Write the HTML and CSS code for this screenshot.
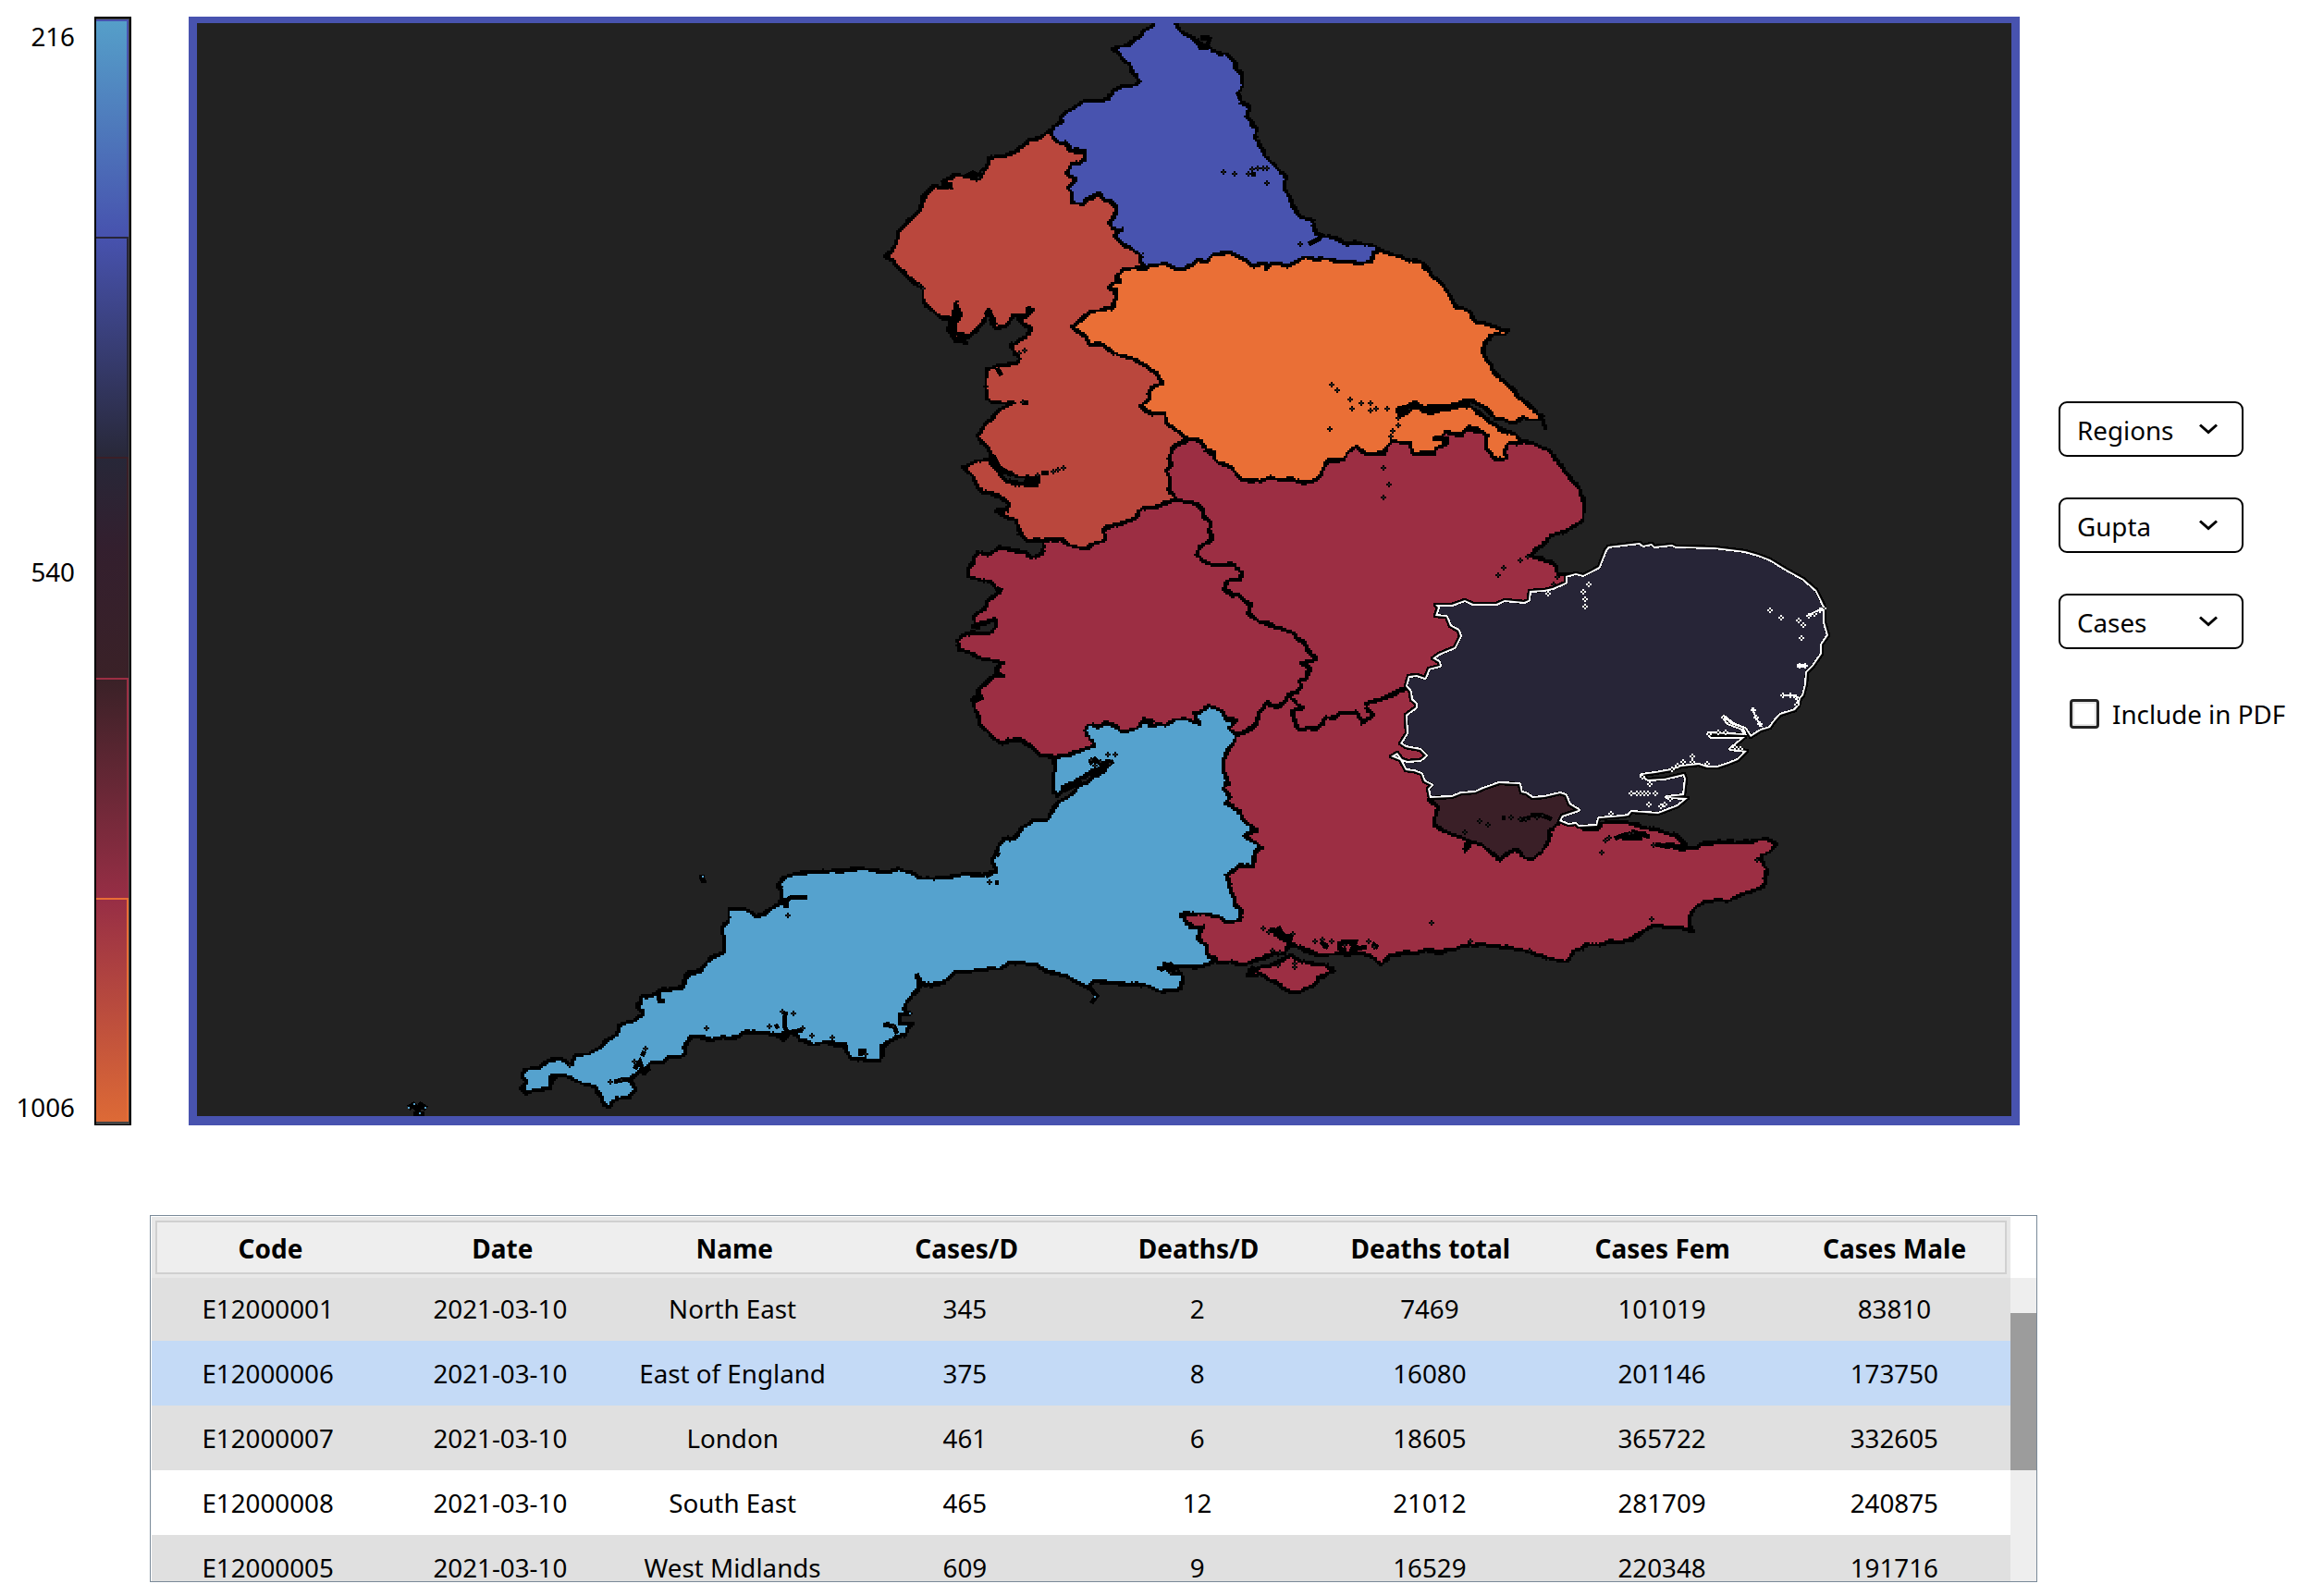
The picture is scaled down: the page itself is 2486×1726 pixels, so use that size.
FILE: index.html
```html
<!DOCTYPE html>
<html lang="en">
<head>
<meta charset="utf-8">
<title>Regional cases</title>
<link rel="stylesheet" href="styles.css">
</head>
<body>
<main class="top">
  <div class="labels"><span>216</span><span>540</span><span>1006</span></div>
  <div class="legend">
    <div class="band b1"></div><div class="band b2"></div><div class="band b3"></div><div class="band b4"></div><div class="band b5"></div>
  </div>
  <div class="map">
    <svg class="canvas" viewBox="213 25 1962 1182" shape-rendering="crispEdges" preserveAspectRatio="none">
      <defs>
        <filter id="coast" filterUnits="userSpaceOnUse" x="213" y="25" width="1962" height="1182" color-interpolation-filters="sRGB">
          <feTurbulence type="fractalNoise" baseFrequency="0.08" numOctaves="1" seed="4" result="noise"/>
          <feDisplacementMap in="SourceGraphic" in2="noise" scale="7" xChannelSelector="R" yChannelSelector="G" result="rough"/>
          <feFlood x="213" y="25" width="1" height="1" flood-color="#000"/>
          <feComposite x="213" y="25" width="2" height="2"/>
          <feTile result="lattice"/>
          <feComposite in="rough" in2="lattice" operator="in" result="a"/>
          <feOffset in="a" dx="1" dy="0" result="b"/>
          <feOffset in="a" dx="0" dy="1" result="c"/>
          <feOffset in="a" dx="1" dy="1" result="d"/>
          <feMerge><feMergeNode in="a"/><feMergeNode in="b"/><feMergeNode in="c"/><feMergeNode in="d"/></feMerge>
        </filter>
        <marker id="dot" markerUnits="userSpaceOnUse" markerWidth="6" markerHeight="6" refX="3" refY="3">
          <path d="M2 0h2v6h-2zM0 2h6v2h-6z" fill="#000"/><path d="M2 2h2v2h-2z" fill="#222"/>
        </marker>
        <marker id="wdot" markerUnits="userSpaceOnUse" markerWidth="6" markerHeight="6" refX="3" refY="3">
          <path d="M2 0h2v6h-2zM0 2h6v2h-6z" fill="#fff"/><path d="M2 2h2v2h-2z" fill="#222"/>
        </marker>
        <path id="east" d="M1739 591 1773 587 1777 590 1786 588 1789 591 1808 589 1812 591 1854 592 1887 596 1901 600 1914 605 1932 616 1950 626 1964 638 1970 650 1973 657 1973 673 1977 687 1970 697 1970 707 1961 720 1954 727 1953 740 1950 752 1947 755 1945 763 1941 768 1925 773 1918 781 1914 787 1904 790 1893 797 1887 788 1874 783 1864 775 1868 782 1884 788 1887 795 1848 793 1850 797 1887 797 1871 810 1889 812 1879 822 1869 826 1857 830 1846 830 1837 827 1818 829 1807 833 1790 836 1775 838 1782 843 1800 842 1821 837 1823 842 1821 860 1802 862 1825 863 1814 872 1793 880 1764 878 1761 882 1754 883 1729 885 1727 893 1707 894 1704 891 1696 892 1686 888 1689 882 1698 879 1707 876 1697 870 1693 860 1687 858 1670 862 1657 863 1650 858 1645 857 1643 848 1621 847 1604 853 1595 857 1580 858 1570 862 1546 863 1544 853 1548 849 1540 845 1537 837 1529 834 1520 833 1514 822 1504 818 1511 814 1516 821 1522 823 1536 822 1542 817 1536 811 1520 808 1514 804 1521 793 1520 773 1531 765 1531 761 1526 757 1525 748 1520 742 1523 731 1532 730 1541 733 1545 723 1557 720 1556 716 1549 712 1556 707 1573 700 1579 688 1577 682 1568 677 1564 667 1552 666 1555 657 1552 654 1570 654 1584 649 1593 653 1618 653 1627 649 1648 651 1653 649 1654 639 1670 638 1679 636 1693 630 1693 623 1704 620 1712 622 1720 618 1729 613 1736 595Z"/>
        <clipPath id="eastClip"><use href="#east"/></clipPath>
      </defs>
      <g class="regions" filter="url(#coast)">
        <path class="r3" d="M1713 897 1727 896 1731 889 1767 890 1780 895 1794 899 1811 902 1823 912 1822 915 1802 913 1812 917 1834 917 1838 913 1872 909 1874 911 1912 907 1919 912 1912 921 1903 923 1906 931 1910 940 1908 956 1897 962 1887 967 1874 971 1864 973 1843 975 1833 981 1827 990 1826 997 1830 1005 1815 1003 1787 1001 1777 1007 1767 1013 1755 1017 1733 1019 1713 1023 1703 1029 1691 1040 1673 1035 1651 1029 1632 1025 1606 1021 1590 1021 1570 1027 1536 1028 1506 1031 1501 1033 1495 1042 1483 1035 1472 1031 1450 1030 1427 1032 1411 1026 1396 1020 1385 1012 1374 1005 1396 1023 1387 1030 1369 1034 1349 1042 1330 1041 1316 1040 1250 1000 1290 900 1290 800 1337 793 1357 785 1362 768 1370 761 1393 752 1450 730 1600 730 1700 870Z"/>
        <path class="r3" d="M1349 1055 1352 1049 1374 1042 1398 1033 1403 1038 1412 1041 1434 1043 1441 1050 1425 1057 1423 1062 1419 1068 1398 1073 1380 1063 1361 1053Z"/>
        <path class="r3" d="M1240 480 1500 440 1648 477 1662 481 1675 486 1690 507 1707 528 1712 543 1712 560 1709 565 1692 573 1677 580 1664 590 1656 600 1664 604 1677 607 1681 614 1685 619 1695 620 1700 640 1600 720 1519 744 1494 755 1477 760 1479 767 1486 771 1472 781 1469 777 1465 770 1450 770 1445 774 1433 777 1432 783 1422 788 1402 787 1397 768 1407 764 1393 752 1250 700Z"/>
        <path class="r3" d="M1270 540 1293 544 1301 552 1302 559 1307 565 1307 573 1311 580 1307 585 1300 588 1293 598 1299 607 1313 610 1334 612 1342 617 1341 625 1325 630 1323 637 1332 643 1338 643 1345 650 1352 653 1349 662 1357 670 1375 675 1397 684 1410 697 1423 712 1406 717 1414 722 1413 733 1404 737 1407 744 1401 748 1393 752 1391 757 1382 763 1370 761 1362 768 1359 776 1357 785 1338 793 1300 830 1160 830 1140 818 1123 816 1112 805 1103 799 1092 800 1082 803 1070 795 1063 787 1059 777 1053 768 1053 757 1051 755 1060 752 1057 747 1068 735 1077 731 1083 731 1076 725 1080 715 1085 715 1063 713 1049 707 1037 701 1033 694 1040 688 1052 684 1068 684 1077 678 1077 670 1073 668 1055 677 1052 668 1058 662 1065 657 1070 647 1080 638 1073 631 1057 627 1046 622 1048 612 1052 605 1058 598 1072 597 1080 591 1092 594 1107 595 1115 603 1127 598 1129 586 1180 560Z"/>
        <path class="r4" d="M1134 143 1122 149 1110 152 1103 158 1096 165 1085 168 1069 170 1070 175 1066 183 1061 190 1054 194 1048 192 1037 189 1024 192 1018 195 1028 200 1019 203 1010 201 1002 206 997 214 995 228 982 238 970 250 969 260 965 271 956 278 965 283 978 295 989 306 997 312 997 324 1005 333 1015 342 1028 343 1025 357 1034 368 1045 371 1037 362 1032 358 1032 350 1037 340 1034 327 1031 345 1034 360 1046 365 1058 353 1065 346 1069 335 1073 342 1076 355 1089 351 1096 342 1107 340 1117 335 1112 331 1115 337 1101 345 1108 351 1115 358 1103 367 1093 373 1096 382 1103 387 1101 392 1091 392 1080 395 1067 398 1067 410 1065 418 1067 431 1074 435 1095 435 1078 445 1067 457 1057 470 1057 474 1065 480 1073 493 1077 503 1087 510 1100 516 1122 517 1120 523 1102 524 1088 518 1080 510 1075 503 1070 495 1057 498 1040 506 1050 513 1062 532 1075 535 1092 543 1087 551 1077 552 1083 557 1098 562 1102 575 1110 584 1127 585 1148 583 1155 591 1167 592 1180 590 1187 586 1195 582 1193 573 1205 567 1222 563 1238 548 1253 548 1270 540 1265 532 1263 513 1260 508 1267 502 1262 496 1270 483 1282 475 1300 400 1250 280 1260 200 1180 140Z"/>
        <path class="r2" d="M1244 29 1249 20 1267 20 1276 33 1288 40 1294 45 1304 50 1311 56 1323 57 1331 62 1336 68 1335 73 1343 82 1344 92 1339 102 1341 109 1351 115 1347 125 1353 134 1359 140 1357 150 1362 158 1376 177 1388 188 1388 202 1397 222 1405 232 1420 240 1422 252 1429 254 1444 257 1452 261 1470 263 1492 269 1500 290 1400 310 1260 310 1236 289 1234 275 1224 268 1208 260 1206 253 1212 248 1204 247 1199 241 1205 232 1207 222 1198 217 1189 209 1176 214 1170 219 1159 217 1157 208 1153 203 1162 194 1153 186 1159 177 1173 172 1172 163 1157 162 1152 155 1142 152 1135 143 1139 136 1148 130 1146 126 1161 116 1172 109 1183 107 1193 109 1199 106 1203 98 1215 93 1227 93 1232 88 1228 80 1224 77 1220 68 1212 62 1204 51 1220 49 1228 40 1235 34Z"/>
        <path class="r5" d="M1236 289 1245 287 1259 285 1274 291 1283 288 1291 285 1294 279 1304 282 1311 275 1326 273 1337 276 1347 281 1355 287 1366 284 1368 290 1374 284 1392 287 1411 279 1437 280 1448 282 1470 283 1483 283 1484 275 1492 269 1503 274 1515 277 1525 282 1537 284 1544 292 1547 298 1555 302 1564 313 1570 325 1577 333 1589 336 1593 344 1598 348 1613 352 1629 357 1627 361 1613 362 1605 368 1603 377 1608 390 1615 402 1637 423 1652 437 1668 452 1671 462 1668 455 1647 452 1632 457 1617 452 1605 442 1593 433 1583 433 1565 438 1540 440 1528 435 1512 441 1512 450 1530 440 1545 447 1557 442 1590 440 1607 453 1617 460 1628 467 1638 470 1648 477 1632 480 1627 488 1627 494 1618 495 1606 485 1606 473 1609 470 1598 464 1589 460 1580 470 1562 468 1553 474 1566 477 1553 485 1550 489 1527 490 1525 478 1505 478 1495 490 1475 490 1468 483 1457 488 1453 497 1437 498 1430 508 1427 515 1419 520 1408 522 1397 517 1382 519 1373 515 1362 519 1342 520 1337 513 1330 505 1315 497 1313 489 1303 485 1298 477 1282 473 1262 458 1258 447 1245 447 1233 438 1242 430 1243 422 1257 413 1250 403 1240 396 1228 388 1220 386 1202 382 1194 372 1178 372 1176 365 1167 360 1159 354 1170 343 1180 336 1192 334 1204 332 1207 315 1197 310 1211 303 1207 298 1215 291Z"/>
        <path class="r1" d="M1140 819 1160 813 1183 806 1173 790 1175 783 1180 783 1187 786 1197 782 1205 785 1212 791 1220 791 1232 785 1235 777 1244 777 1242 783 1258 784 1270 778 1287 778 1297 783 1292 770 1297 770 1308 763 1327 777 1337 778 1329 788 1337 793 1333 802 1326 812 1321 828 1325 840 1323 852 1329 862 1325 869 1333 871 1339 878 1346 888 1351 894 1358 898 1347 902 1356 911 1363 917 1356 922 1355 937 1342 934 1335 940 1325 944 1331 960 1335 977 1341 983 1339 993 1325 997 1318 991 1305 989 1295 987 1277 989 1283 997 1289 1002 1301 1002 1294 1013 1304 1020 1304 1032 1316 1038 1301 1043 1278 1046 1253 1046 1277 1053 1278 1060 1275 1069 1256 1072 1247 1067 1220 1063 1184 1061 1177 1069 1167 1063 1153 1056 1137 1051 1122 1045 1107 1042 1091 1041 1080 1047 1067 1046 1056 1050 1032 1051 1020 1061 1005 1066 996 1062 991 1053 994 1068 982 1080 978 1090 983 1095 972 1097 972 1106 985 1107 979 1119 967 1122 953 1132 952 1145 940 1147 920 1143 914 1135 913 1130 898 1127 880 1129 865 1124 862 1118 852 1118 847 1124 843 1120 830 1117 807 1115 798 1121 777 1123 760 1123 753 1119 744 1122 739 1132 741 1138 737 1143 725 1141 713 1148 703 1150 697 1160 693 1157 680 1167 687 1177 680 1186 667 1187 660 1197 653 1193 648 1183 642 1174 630 1170 617 1167 610 1163 597 1163 595 1176 578 1179 570 1181 563 1176 568 1169 564 1163 568 1156 580 1155 595 1146 607 1144 616 1151 624 1140 637 1140 655 1125 668 1118 670 1108 685 1104 693 1095 689 1087 693 1078 703 1077 713 1071 737 1068 743 1053 758 1048 767 1037 782 1031 783 1017 781 1005 787 995 788 983 803 983 817 989 828 987 847 974 845 963 841 958 848 948 870 943 901 941 929 939 960 943 970 939 984 943 998 949 1025 949 1041 945 1068 946 1077 942 1073 930 1080 915 1084 907 1096 906 1108 893 1118 888 1129 886 1142 870 1156 860 1170 848 1194 832 1199 823 1191 828 1170 840 1149 851 1142 862 1138 855Z"/>
        <path class="r6" d="M1546 863 1554 873 1550 892 1567 901 1586 909 1584 920 1591 911 1596 910 1607 918 1621 928 1637 919 1643 920 1648 928 1657 928 1668 920 1673 912 1675 898 1688 889 1720 870 1660 840 1600 840Z"/>
      </g>
      <g class="creeks">
        <path d="M1294 42 1298 51 1305 51 1308 42 1298 41 1308 40M1415 264 1427 258 1429 252M1018 199 1030 199M1021 203 1030 201M1044 191 1052 187 1058 190 1065 182M1018 344 1028 344 1029 355M1065 337 1072 341 1073 352M1109 334 1117 336M1078 398 1083 406M1338 99 1341 106M1353 188 1358 189M1026 352 1032 366 1045 370"/>
        <path d="M1516 441 1530 439 1545 444 1590 436M1549 475 1567 474M1074 493 1080 505 1094 514M1108 519 1122 520M1126 512 1134 511M1077 636 1084 639M1050 677 1060 679M1078 730 1084 730M1052 755 1063 754 1052 759M1109 433 1109 438M1236 780 1246 780M1378 763 1386 764"/>
        <path d="M1180 835 1196 829 1204 823M1178 826 1184 821 1190 826M1150 855 1170 845M1066 948 1073 944M1076 954 1080 954M1075 922 1081 925M1257 1042 1272 1046M1259 1044 1264 1047M1254 1049 1266 1043 1275 1052M991 1053 996 1064 1003 1066M1178 1068 1186 1077 1180 1085M1325 847 1331 848"/>
        <path d="M849 977 850 982 850 974 856 970 873 970M841 958 846 961M712 1073 713 1082 719 1082M688 1087 693 1085M694 1142 697 1137M686 1156 692 1148 696 1160 703 1155M664 1170 672 1168 682 1167 684 1174M850 1094 848 1102 849 1112 854 1119M838 1111 842 1109M845 1118 868 1114M850 1122 854 1114M930 1142 930 1136 937 1136M955 1108 967 1110 970 1118M958 1107 962 1107M913 1127 915 1134"/>
        <path d="M1374 1005 1384 1007 1396 1018M1382 1002 1386 1010M1394 1010 1396 1017M1428 1018 1436 1025M1432 1026 1434 1020M1448 1018 1448 1026 1456 1028M1450 1018 1466 1018 1462 1027 1478 1024M1460 1020 1470 1026M1484 1020 1490 1025M1376 1028 1378 1033M1352 1046 1360 1050M1348 1055 1354 1052"/>
        <path d="M1746 907 1756 903 1780 901M1754 906 1776 907M1764 899 1784 905M1790 913 1806 916M1624 884 1628 884M1655 882 1666 881 1678 886M1643 887 1655 884M1586 914 1590 908"/>
      </g>
      <g class="regions">
        <use href="#east" class="r7"/>
        <use href="#east" class="selected" clip-path="url(#eastClip)"/>
      </g>
      <g class="dots">
        <path d="M1323 186 1335 188 1350 188 1354 183 1360 182 1366 182 1370 182 1370 198 1406 264 1440 416 1446 422 1460 432 1472 436 1482 436 1462 442 1482 444 1488 442 1500 442 1438 464 1512 452 1512 460 1506 466 1504 472 1496 506 1502 524 1496 538 1652 602 1644 606 1626 614 1620 622 1684 624 1680 632"/>
        <path d="M1108 379 1102 382 1106 435 1150 506 1144 508 1139 510 1122 514 1198 816 1206 816 1180 822 1184 828 1190 824 1200 826 1070 954 998 312 994 308 1058 192 1062 186"/>
        <path d="M852 990 764 1112 832 1110 846 1094 858 1096 868 1112 878 1120 900 1122 698 1134 686 1148 660 1170 672 1168 616 1152 966 1110 936 1140 984 1096"/>
        <path d="M1548 998 1732 922 1736 909 1740 906 1766 901 1788 914 1762 902 1900 930 1786 994 1590 1018 1654 1028 1600 888 1609 892 1584 900 1634 884 1644 886 1650 886 1662 884 1668 882 1366 1004 1372 1008 1376 1028 1384 1030 1398 1010 1422 1018 1430 1016 1440 1018 1454 1022 1480 1018 1486 1024 1400 1042 1400 1046 1382 1044 1266 1052 1272 1050"/>
      </g>
      <path class="scilly" d="M759 946v3l2 5v1M442 1198l5-3 5 5 3-5 6 4M447 1205h12"/>
      <path class="islets" d="M759 947h2v2h-2zM441 1197h2v2h-2zM447 1193h2v2h-2zM459 1197h2v2h-2zM453 1203h2v2h-2zM1183 1077h2v2h-2zM983 1095h2v2h-2z"/>
      <g class="wdots">
        <path d="M1718 632 1712 640 1714 648 1714 656 1674 642 1914 660 1926 668 1945 671 1950 676 1948 690 1946 720 1952 720 1956 666 1962 664 1968 660 1972 658 1928 752 1936 752 1942 754 1943 762 1896 768 1899 776 1903 783 1864 776 1870 782 1858 792 1866 792 1848 794 1876 808 1882 810 1830 818 1830 824 1820 824 1846 826 1808 832 1814 828 1776 840 1784 848 1764 858 1770 858 1774 858 1778 858 1782 858 1790 858 1783 870 1796 872 1800 870 1806 864 1742 880"/>
        <path class="wline" d="M1954 666 1964 661 1972 659M1895 765 1898 775 1905 786M1864 775 1872 782 1884 786 1888 795M1928 752 1942 752 1945 762M1944 719h8v2h-8z"/>
      </g>
    </svg>
  </div>
  <div class="controls">
    <div class="select"><span>Regions</span><svg width="20" height="12" viewBox="0 0 20 12"><path d="M1 1.500 10 9.500 19 1.500" fill="none" stroke="#000" stroke-width="3"/></svg></div>
    <div class="select"><span>Gupta</span><svg width="20" height="12" viewBox="0 0 20 12"><path d="M1 1.500 10 9.500 19 1.500" fill="none" stroke="#000" stroke-width="3"/></svg></div>
    <div class="select"><span>Cases</span><svg width="20" height="12" viewBox="0 0 20 12"><path d="M1 1.500 10 9.500 19 1.500" fill="none" stroke="#000" stroke-width="3"/></svg></div>
    <div class="check"><span class="box"></span><span>Include in PDF</span></div>
  </div>
</main>
<section class="table">
  <div class="grid">
    <div class="row head"><span>Code</span><span>Date</span><span>Name</span><span>Cases/D</span><span>Deaths/D</span><span>Deaths total</span><span>Cases Fem</span><span>Cases Male</span></div>
    <div class="body">
      <div class="row alt first"><span>E12000001</span><span>2021-03-10</span><span>North East</span><span>345</span><span>2</span><span>7469</span><span>101019</span><span>83810</span></div>
      <div class="row sel"><span>E12000006</span><span>2021-03-10</span><span>East of England</span><span>375</span><span>8</span><span>16080</span><span>201146</span><span>173750</span></div>
      <div class="row alt"><span>E12000007</span><span>2021-03-10</span><span>London</span><span>461</span><span>6</span><span>18605</span><span>365722</span><span>332605</span></div>
      <div class="row"><span>E12000008</span><span>2021-03-10</span><span>South East</span><span>465</span><span>12</span><span>21012</span><span>281709</span><span>240875</span></div>
      <div class="row alt last"><span>E12000005</span><span>2021-03-10</span><span>West Midlands</span><span>609</span><span>9</span><span>16529</span><span>220348</span><span>191716</span></div>
    </div>
  </div>
  <div class="side"><div class="track"><div class="thumb"></div></div></div>
</section>
</body>
</html>
```
FILE: styles.css
```css
* { box-sizing: border-box; }
body {
  margin: 0;
  width: 2486px;
  height: 1726px;
  overflow: hidden;
  background: #fff;
  color: #000;
  font: 27.75px/40px "Noto Sans", sans-serif;
}
.top {
  display: grid;
  grid-template-columns: 81px 40px 1980px 1fr;
  height: 1217px;
  padding-top: 18px;
}
.labels {
  display: flex;
  flex-direction: column;
  justify-content: space-between;
  align-items: flex-end;
  padding-top: 1px;
}
.legend {
  margin-left: 21px;
  width: 40px;
  display: grid;
  grid-template-rows: 235px 238px 239px 238px 1fr;
  border: 2px solid #000;
  border-bottom-width: 1px;
  padding: 1px 1px 3px 0;
  background: #444;
}
.band { border-right: 2px solid; border-top: 2px solid; }
.b1 { border-color: #4853af; background: linear-gradient(#559fc9, #4752ae); }
.b2 { border-color: #272538; background: linear-gradient(#4752ae, #282839); }
.b3 { border-color: #3a1f27; background: linear-gradient(#272738, #331f2e 40%, #3a2127); }
.b4 { border-color: #9c2e43; background: linear-gradient(#3a2127, #972e45); }
.b5 { border-color: #e96e35; background: linear-gradient(#972e45, #dd6a36); }
.map {
  margin-left: 83px;
  width: 1980px;
  border: solid #4853af;
  border-width: 7px 9px 10px;
  background: #222;
}
.canvas { display: block; width: 1962px; height: 1182px; }
.regions > * { stroke: #000; stroke-width: 4.5; stroke-linejoin: round; }
.r1 { fill: #55a2ce; }
.r2 { fill: #4853af; }
.r3 { fill: #9c2e43; }
.r4 { fill: #ba473d; }
.r5 { fill: #ea6f36; }
.r6 { fill: #3a1f27; }
.r7 { fill: #272537; }
.regions > .selected { fill: none; stroke: #fff; stroke-width: 4; }
.creeks { fill: none; stroke: #000; stroke-width: 5; }
.dots path {
  fill: none;
  marker-start: url(#dot);
  marker-mid: url(#dot);
  marker-end: url(#dot);
}
.wdots path:first-child {
  fill: none;
  marker-start: url(#wdot);
  marker-mid: url(#wdot);
  marker-end: url(#wdot);
}
.wdots .wline { fill: none; stroke: #fff; stroke-width: 2; }
.scilly { fill: none; stroke: #000; stroke-width: 6; }
.islets { fill: #55a2ce; }
.controls {
  margin-left: 125px;
  padding-top: 416px;
  display: flex;
  flex-direction: column;
  gap: 44px;
  white-space: nowrap;
}
.select {
  display: flex;
  justify-content: space-between;
  align-items: center;
  flex: none;
  width: 200px;
  height: 60px;
  padding: 1px 26px 0 18px;
  border: 2px solid #000;
  border-radius: 9px;
}
.select svg { margin-top: -2px; }
.check {
  display: flex;
  align-items: center;
  gap: 14px;
  margin: 5px 0 0 12px;
}
.check .box + span { padding-top: 1px; }
.box {
  width: 32px;
  height: 32px;
  border: 3px solid #222;
  border-radius: 4px;
  box-shadow: inset 0 0 0 2px #e4e4e4;
}
.table {
  display: flex;
  margin: 97px 0 0 162px;
  width: 2041px;
  height: 397px;
  border: 1px solid #7a8a99;
  padding: 1px 0 0 1px;
  overflow: hidden;
}
.grid { width: 2010px; }
.row {
  display: grid;
  grid-template-columns: repeat(8, 1fr);
  align-items: center;
  height: 70px;
  line-height: 28px;
  text-align: center;
}
.head {
  height: 66px;
  padding: 1px 0 0 3px;
  background: #eee;
  box-shadow: inset 0 0 0 4px #e8e8e8, inset 0 0 0 6px #d0d0d0;
  font-size: 28px;
  font-weight: bold;
}
.first { height: 68px; padding-bottom: 2px; }
.last { height: 50px; padding-top: 20px; }
.alt { background: #e0e0e0; }
.sel { background: #c4daf6; }
.side { flex: 1; padding-top: 66px; }
.track { height: 328px; padding-top: 38px; background: #eee; }
.thumb { height: 170px; background: #9c9c9c; }
```
